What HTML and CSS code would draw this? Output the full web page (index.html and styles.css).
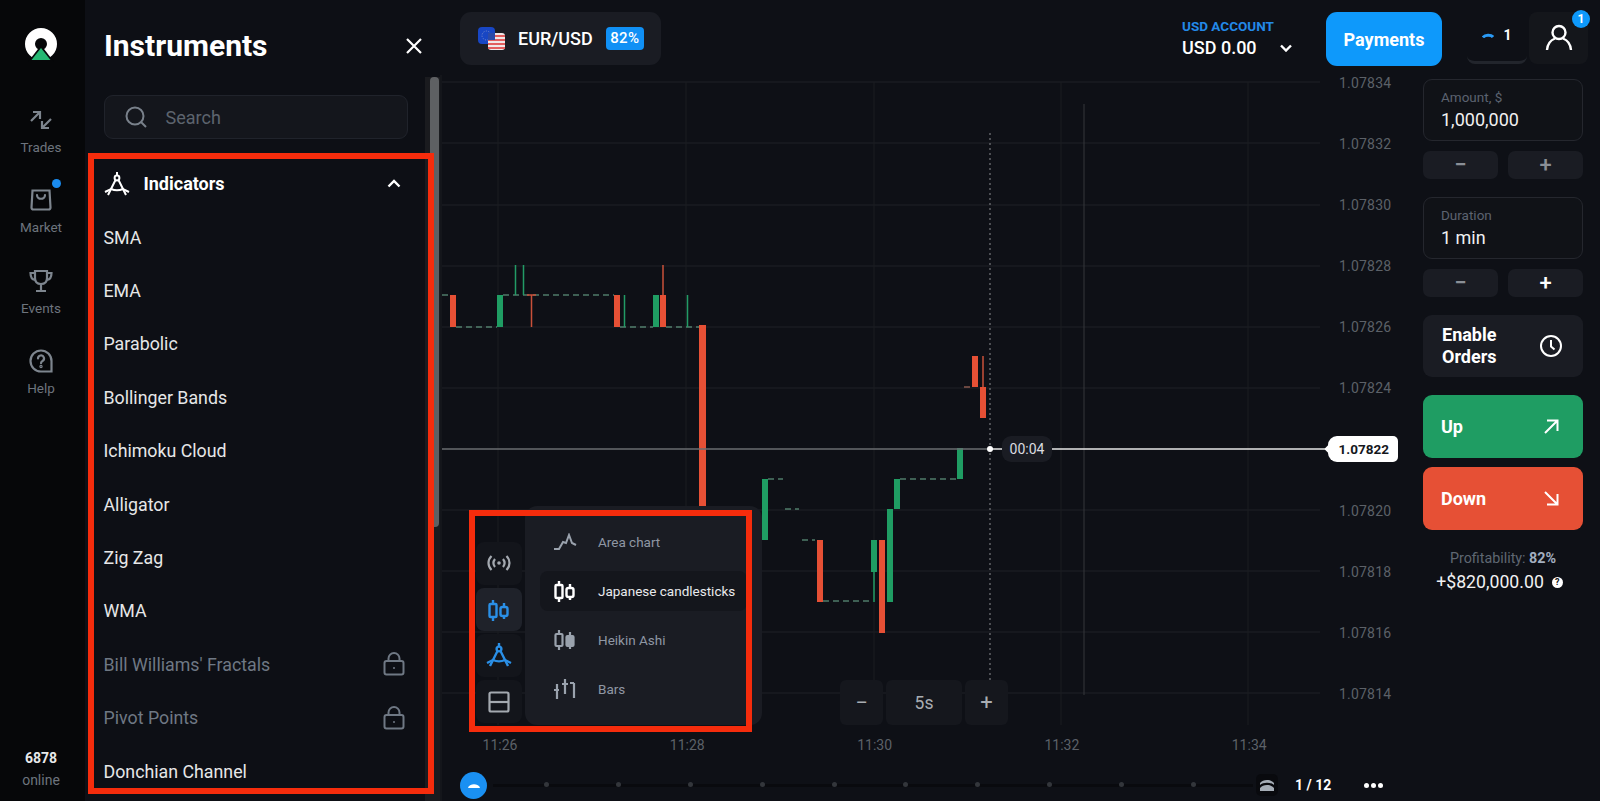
FILE: index.html
```html
<!DOCTYPE html>
<html lang="en">
<head>
<meta charset="utf-8">
<title>Instruments</title>
<link rel="stylesheet" href="styles.css">
</head>
<body>
<div class="app">
  <nav class="nav">
    <svg class="logo" viewBox="0 0 36 36" width="36" height="36"><circle cx="18" cy="17" r="11" fill="none" stroke="#fff" stroke-width="10"/><polygon points="18,18 5,35 31,35" fill="#060709"/><polygon points="18,21 8.500,33 27.500,33" fill="#25b873"/></svg>
    <a class="nav-item trades">
      <svg viewBox="0 0 24 24" width="24" height="24" fill="none" stroke="#7d858e" stroke-width="2.200"><path d="M2 13L11 4M4 4h7v7"/><path d="M22 11L13 20M20 20h-7v-7"/></svg>
      <span>Trades</span>
    </a>
    <a class="nav-item market">
      <i class="dot"></i>
      <svg viewBox="0 0 24 24" width="24" height="24" fill="none" stroke="#7d858e" stroke-width="2.200"><path d="M3.500 2.500h17l1 17a2 2 0 0 1-2 2h-15a2 2 0 0 1-2-2z"/><path d="M8 7c0 5 8 5 8 0" stroke-linecap="round"/></svg>
      <span>Market</span>
    </a>
    <a class="nav-item events">
      <svg viewBox="0 0 24 24" width="24" height="24" fill="none" stroke="#7d858e" stroke-width="2.200"><path d="M6 2h12v7c0 4-2.500 6-6 6s-6-2-6-6z"/><path d="M6 4H1.500c0 4 1.500 6.500 4.500 7M18 4h4.500c0 4-1.500 6.500-4.500 7M12 15v6M7 22h10"/></svg>
      <span>Events</span>
    </a>
    <a class="nav-item help">
      <svg viewBox="0 0 24 24" width="24" height="24" fill="none" stroke="#7d858e" stroke-width="2.200"><path d="M12 1.500a10.500 10.500 0 1 0 0 21h10.500V12A10.500 10.500 0 0 0 12 1.500z"/><path d="M9 9.500a3 3 0 1 1 4.500 2.500c-1 .6-1.500 1.200-1.500 2.200" stroke-linecap="round"/><circle cx="12" cy="17.500" r=".6"/></svg>
      <span>Help</span>
    </a>
    <div class="online"><b>6878</b><span>online</span></div>
  </nav>

  <aside class="panel">
    <header class="panel-head">
      <h1>Instruments</h1>
      <svg viewBox="0 0 18 18" width="18" height="18" fill="none" stroke="#fff" stroke-width="2.200"><path d="M2 2l14 14M16 2L2 16"/></svg>
    </header>
    <div class="panel-scroll">
      <div class="panel-body">
        <div class="search">
          <svg viewBox="0 0 22 22" width="22" height="22" fill="none" stroke="#79818b" stroke-width="2"><circle cx="10" cy="10" r="8.500"/><path d="M16 16l5 5"/></svg>
          <span>Search</span>
        </div>
        <div class="group-head">
          <svg class="compass" viewBox="0 0 26 26" width="26" height="26" fill="none" stroke="#fff" stroke-width="2"><use href="#compass-shape"/></svg>
          <strong>Indicators</strong>
          <svg viewBox="0 0 14 9" width="14" height="9" fill="none" stroke="#fff" stroke-width="2.400"><path d="M1.500 7.500L7 2l5.500 5.500"/></svg>
        </div>
        <ul class="rows">
          <li>SMA</li>
          <li>EMA</li>
          <li>Parabolic</li>
          <li>Bollinger Bands</li>
          <li>Ichimoku Cloud</li>
          <li>Alligator</li>
          <li>Zig Zag</li>
          <li>WMA</li>
          <li class="locked">Bill Williams' Fractals<svg viewBox="0 0 22 24" width="22" height="24" fill="none" stroke="#6f7884" stroke-width="2"><rect x="1.500" y="9" width="19" height="13.500" rx="2"/><path d="M5.500 9V6.500a5.500 5.500 0 0 1 11 0V9"/><circle cx="11" cy="16" r="1" fill="#6f7884" stroke="none"/></svg></li>
          <li class="locked">Pivot Points<svg viewBox="0 0 22 24" width="22" height="24" fill="none" stroke="#6f7884" stroke-width="2"><rect x="1.500" y="9" width="19" height="13.500" rx="2"/><path d="M5.500 9V6.500a5.500 5.500 0 0 1 11 0V9"/><circle cx="11" cy="16" r="1" fill="#6f7884" stroke="none"/></svg></li>
          <li>Donchian Channel</li>
        </ul>
      </div>
      <div class="track"><div class="thumb"></div></div>
    </div>
    <div class="mark mark-panel"></div>
  </aside>

  <main class="main">
    <header class="topbar">
      <div class="pair">
        <svg viewBox="0 0 28 26" width="28" height="26">
          <rect x="0" y="1" width="17" height="17" rx="4" fill="#1846c4"/>
          <circle cx="8.500" cy="9.500" r="4.500" fill="none" stroke="#7d8fc9" stroke-width="1" stroke-dasharray="1 1.500"/>
          <rect x="10" y="7" width="17" height="17" rx="3" fill="#f0e6e6"/>
          <path d="M10 10h17M10 14h17M10 18h17M10 22h17" stroke="#e25c5c" stroke-width="2"/>
          <rect x="10" y="7" width="7" height="7" fill="#2b4aa8"/>
        </svg>
        <span class="pair-name">EUR/USD</span>
        <span class="pct">82%</span>
      </div>
      <div class="account">
        <span class="acc-label">USD ACCOUNT</span>
        <span class="acc-value">USD 0.00<svg viewBox="0 0 12 8" width="12" height="8" fill="none" stroke="#fff" stroke-width="2.400"><path d="M1 1.500l5 5 5-5"/></svg></span>
      </div>
      <button class="pay">Payments</button>
      <div class="live">
        <svg viewBox="0 0 12 5" width="12" height="5" fill="none" stroke="#2a9af5" stroke-width="3"><path d="M1 4.500C3 1.500 9 1.500 11 4"/></svg>
        <b>1</b>
      </div>
      <div class="user">
        <svg viewBox="0 0 28 28" width="28" height="28" fill="none" stroke="#fff" stroke-width="2.400"><circle cx="14" cy="8.500" r="6.500"/><path d="M2 26c.5-6 4-10 8-11.500M26 26c-.5-6-4-10-8-11.500"/></svg>
        <i class="badge">1</i>
      </div>
    </header>

    <section class="work">
      <div class="stage">
        <svg class="chart" viewBox="440 66 983 735" width="983" height="735">
          <g class="grid">
            <path class="grid-v" d="M441 75V801"/>
            <path d="M442 82H1320M442 143H1320M442 205H1320M442 266H1320M442 327H1320M442 388H1320M442 510H1320M442 571H1320M442 632H1320M442 693H1320"/>
            <path class="grid-v" d="M498 82V725M686 82V725M874 82V725M1061 82V725M1248 82V725"/>
            <path class="grid-strong" d="M1084 104V695"/>
          </g>
          <g class="dash-up">
            <path d="M442 295h8M503 295h111M456 327h41M620 327h33M666 327h33M768 479h15M785 509h14M802 540h13M823 601h47M900 479h57"/>
          </g>
          <path class="dash-dn" d="M964 387h8"/>
          <g class="wick-up"><path d="M515.500 265v30M523.500 265v30M624.500 295v32M687.500 295v32M874 572v30"/></g>
          <g class="wick-dn"><path d="M531.500 295v32M527 295h9M663 265v30M983 356v31"/></g>
          <g class="up">
            <rect x="497" y="295" width="6" height="32"/><rect x="653" y="295" width="6" height="32"/>
            <rect x="762" y="479" width="6" height="61"/><rect x="871" y="540" width="6" height="32"/>
            <rect x="887" y="509" width="6" height="93"/><rect x="894" y="479" width="6" height="30"/>
            <rect x="957" y="448" width="6" height="31"/>
          </g>
          <g class="dn">
            <rect x="450" y="295" width="6" height="32"/><rect x="614" y="295" width="6" height="32"/>
            <rect x="660" y="295" width="6" height="32"/><rect x="699" y="325" width="7" height="182"/>
            <rect x="817" y="540" width="6" height="62"/><rect x="879" y="540" width="6" height="93"/>
            <rect x="972" y="356" width="6" height="31"/><rect x="980" y="387" width="6" height="31"/>
          </g>
          <path class="now-past" d="M442 449H990"/>
          <path class="now-dotted" d="M990 133V690"/>
          <path class="now-future" d="M990 449H1002M1052 449H1330"/>
          <circle cx="990" cy="449" r="3" fill="#fff"/>
        </svg>

        <div class="prices">
          <span>1.07834</span><span>1.07832</span><span>1.07830</span><span>1.07828</span><span>1.07826</span><span>1.07824</span>
          <span class="hole"></span>
          <span>1.07820</span><span>1.07818</span><span>1.07816</span><span>1.07814</span>
        </div>
        <div class="timer">00:04</div>
        <div class="tag">1.07822</div>

        <div class="tools">
          <div class="strip">
            <button><svg viewBox="0 0 26 18" width="26" height="18" fill="none" stroke="#a4a9b0" stroke-width="2.200"><path d="M5.500 2C1.500 6 1.500 12 5.500 16M20.500 2c4 4 4 10 0 14M9 5c-2 2.500-2 5.500 0 8M17 5c2 2.500 2 5.500 0 8"/><circle cx="13" cy="9" r="1.800" fill="#a4a9b0" stroke="none"/></svg></button>
            <button class="on"><svg viewBox="0 0 24 24" width="24" height="24" fill="none" stroke="#2a8fe6" stroke-width="2.400"><use href="#candles"/></svg></button>
            <button><svg viewBox="0 0 26 26" width="26" height="26" fill="none" stroke="#2a8fe6" stroke-width="2.400"><use href="#compass-shape"/></svg></button>
            <button><svg viewBox="0 0 22 22" width="22" height="22" fill="none" stroke="#a4a9b0" stroke-width="2.200"><rect x="1.500" y="1.500" width="19" height="19" rx="1.500"/><path d="M1.500 11h19"/></svg></button>
          </div>
          <div class="menu">
            <div class="menu-row"><svg viewBox="0 0 24 18" width="24" height="18" fill="none" stroke="#9aa2ad" stroke-width="2"><path d="M1 16h5l4-7 3 1 3-8 3 8 4 2"/></svg><span>Area chart</span></div>
            <div class="menu-row sel"><svg viewBox="0 0 24 24" width="24" height="24" fill="none" stroke="#fff" stroke-width="2.400"><use href="#candles"/></svg><span>Japanese candlesticks</span></div>
            <div class="menu-row"><svg viewBox="0 0 24 24" width="24" height="24" fill="none" stroke="#9aa2ad" stroke-width="2.200"><path d="M6 2v4M6 18v4M17 4v4M17 18v3"/><rect x="2.500" y="6" width="7" height="12" rx="1"/><rect x="13.500" y="8" width="7" height="10" rx="1" fill="#9aa2ad"/></svg><span>Heikin Ashi</span></div>
            <div class="menu-row"><svg viewBox="0 0 24 22" width="24" height="22" fill="none" stroke="#9aa2ad" stroke-width="2.200"><path d="M4 6v15M1 12h5M12 1v15M9 6h6M21 5v15M17 5h4"/></svg><span>Bars</span></div>
          </div>
          <div class="mark mark-tools"></div>
        </div>

        <div class="zoom">
          <span>−</span><span class="wide">5s</span><span>+</span>
        </div>

        <div class="times"><span>11:26</span><span>11:28</span><span>11:30</span><span>11:32</span><span>11:34</span></div>

        <div class="timeline">
          <span class="handle"><svg viewBox="0 0 12 6" width="12" height="6" fill="#fff"><path d="M0 6C1 1 11 1 12 6z"/></svg></span>
          <div class="ticks"><i></i><i></i><i></i><i></i><i></i><i></i><i></i><i></i><i></i><i></i></div>
          <span class="layers"><svg viewBox="0 0 14 12" width="14" height="12" fill="#a5adb6"><path d="M0 4C3 0 11 0 14 4V6C11 3 3 3 0 6zM0 9C3 5 11 5 14 9V12H0z"/></svg></span>
          <b class="page">1 / 12</b>
          <span class="more"><i></i><i></i><i></i></span>
        </div>
      </div>

      <div class="trade">
        <div class="field"><label>Amount, $</label><span>1,000,000</span></div>
        <div class="steppers"><button class="dim">−</button><button class="dim">+</button></div>
        <div class="field second"><label>Duration</label><span>1 min</span></div>
        <div class="steppers"><button class="dim">−</button><button>+</button></div>
        <button class="orders">Enable<br>Orders<svg viewBox="0 0 24 24" width="24" height="24" fill="none" stroke="#fff" stroke-width="2"><circle cx="12" cy="12" r="10"/><path d="M12 6v6.500l3.500 3"/></svg></button>
        <button class="bet up-btn">Up<svg viewBox="0 0 16 16" width="16" height="16" fill="none" stroke="#fff" stroke-width="2"><path d="M2 14L14.500 1.500M4 1.500h10.500V12"/></svg></button>
        <button class="bet down-btn">Down<svg viewBox="0 0 16 16" width="16" height="16" fill="none" stroke="#fff" stroke-width="2"><path d="M2 2l12.500 12.500M14.500 4v10.500H4"/></svg></button>
        <p class="profit-label">Profitability: <b>82%</b></p>
        <p class="profit">+$820,000.00<i>?</i></p>
      </div>
    </section>
  </main>
</div>

<svg class="defs" width="0" height="0" aria-hidden="true">
  <defs>
    <g id="compass-shape">
      <path d="M13 1v4"/><circle cx="13" cy="7" r="2.400"/>
      <path d="M11.500 9L4 24M14.500 9L22 24"/>
      <path d="M1 21l6-3c4 1.800 8 1.800 12 0l6 3"/>
    </g>
    <g id="candles">
      <path d="M6 2v4M6 19v4M17 5v4M17 18v3"/>
      <rect x="2.500" y="6" width="7" height="13" rx="1"/>
      <rect x="13.500" y="9" width="7" height="9" rx="2"/>
    </g>
  </defs>
</svg>
</body>
</html>
```
FILE: styles.css
```css
* { box-sizing: border-box; margin: 0; padding: 0; }
html, body { height: 100%; overflow: hidden; }
body { background: #0e1016; color: #fff; font-family: Roboto, "Liberation Sans", sans-serif; }
button { font-family: inherit; border: 0; color: #fff; }
ul { list-style: none; }
i { font-style: normal; }
.defs { position: absolute; }

.app { display: flex; width: 1600px; height: 801px; }

/* nav */
.nav { width: 85px; flex: none; background: #060709; display: flex; flex-direction: column; align-items: center; padding: 27px 3px 0 0; }
.logo { margin-bottom: 45px; flex: none; }
.nav-item { position: relative; display: flex; flex-direction: column; align-items: center; gap: 7px; height: 80.300px; color: #6d747d; font-size: 13.500px; line-height: 16px; }
.nav-item svg { display: block; }
.dot { position: absolute; top: -9.500px; right: 1.500px; width: 9px; height: 9px; border-radius: 50%; background: #1a8cf0; }
.online { margin-top: auto; margin-bottom: 12px; display: flex; flex-direction: column; align-items: center; gap: 5px; font-size: 14px; line-height: 17px; }
.online b { font-weight: 700; color: #e8e9ea; }
.online span { color: #6d747d; }

/* panel */
.panel { position: relative; width: 355px; flex: none; background: #0d0f15; display: flex; flex-direction: column; overflow: hidden; }
.panel-head { height: 77px; flex: none; display: flex; align-items: center; justify-content: space-between; padding: 15px 17px 0 19px; }
.panel-head h1 { font-size: 30px; line-height: 32px; font-weight: 700; }
.panel-scroll { flex: 1; display: flex; min-height: 0; }
.panel-body { width: 340px; padding: 18px 17px 0 18.500px; }
.search { height: 44px; display: flex; align-items: center; gap: 19px; padding-left: 20px; background: #14161c; border: 1px solid #20232b; border-radius: 9px; color: #5d646e; font-size: 18px; }
.group-head { height: 53.500px; margin-top: 18px; display: flex; align-items: center; gap: 14px; font-size: 18px; padding-right: 7px; }
.group-head strong { font-weight: 700; flex: 1; }
.rows li { height: 53.400px; display: flex; align-items: center; justify-content: space-between; font-size: 17.800px; color: #e6e7e8; padding-right: 3px; }
.rows li.locked { color: #6f7884; }
.track { width: 15px; background: #1a1b1f; padding-left: 5px; }
.thumb { width: 9px; height: 450px; background: #5e6063; border-radius: 4px; }

/* annotation frames */
.mark { position: absolute; border: 6px solid #f52c0c; pointer-events: none; }
.mark-panel { left: 3px; top: 153px; width: 346px; height: 641px; }
.mark-tools { left: -7px; top: -32px; width: 283px; height: 222px; }

/* main */
.main { flex: 1; display: flex; flex-direction: column; min-width: 0; }
.topbar { height: 66px; flex: none; display: flex; align-items: flex-start; padding: 12px 12px 0 20px; }
.pair { width: 201px; height: 53px; background: #1a1c23; border-radius: 11px; display: flex; align-items: center; padding-left: 18px; }
.pair-name { margin-left: 12px; font-size: 18px; font-weight: 500; }
.pct { margin-left: 13px; width: 38px; height: 23px; border-radius: 4px; background: #1090f5; font-size: 15px; font-weight: 500; text-align: center; line-height: 23px; letter-spacing: .3px; }
.account { margin-left: auto; width: 144px; display: flex; flex-direction: column; padding-top: 4px; }
.acc-label { font-size: 13.500px; line-height: 20px; font-weight: 700; color: #2389e8; }
.acc-value { font-size: 18px; line-height: 24px; font-weight: 500; display: flex; align-items: center; justify-content: space-between; padding-right: 34px; }
.pay { width: 116px; height: 54px; background: #0e99fb; border-radius: 11px; font-size: 18px; font-weight: 700; }
.live { width: 60px; height: 52px; margin-left: 25px; border-bottom: 3px solid #22252c; border-radius: 0 0 8px 8px; display: flex; align-items: center; justify-content: center; gap: 9px; padding-bottom: 3px; }
.live b { font-size: 14px; font-weight: 700; }
.user { position: relative; width: 59px; height: 52px; margin-left: 2px; background: #14161b; border-radius: 8px; display: flex; align-items: center; justify-content: center; }
.badge { position: absolute; right: -2px; top: -2px; width: 18px; height: 18px; border-radius: 50%; background: #0e99fb; font-size: 12px; font-weight: 700; text-align: center; line-height: 18px; }

.work { flex: 1; display: flex; min-height: 0; }
.stage { position: relative; width: 983px; flex: none; }
.chart { position: absolute; left: 0; top: 0; display: block; }
.grid path { stroke: #1e2026; stroke-width: 1; fill: none; }
.grid .grid-v { stroke: #1a1c21; }
.grid .grid-strong { stroke: #34363b; }
.dash-up path { stroke: #6fb092; stroke-width: 1.200; stroke-dasharray: 6 4; fill: none; }
.dash-dn { stroke: #a66a5a; stroke-width: 1.200; stroke-dasharray: 6 4; fill: none; }
.wick-up path { stroke: #229b66; stroke-width: 1.500; fill: none; }
.wick-dn path { stroke: #c9503a; stroke-width: 1.500; fill: none; }
.up rect { fill: #1f9d63; }
.dn rect { fill: #e65035; }
.now-past { stroke: #6a6c70; stroke-width: 1.500; fill: none; }
.now-dotted { stroke: #8a8c90; stroke-width: 1; stroke-dasharray: 2 3; fill: none; }
.now-future { stroke: #e6e6e6; stroke-width: 1.500; fill: none; }

.prices { position: absolute; left: 899px; top: -13px; display: flex; flex-direction: column; font-size: 14px; line-height: 61.100px; color: #5c6168; letter-spacing: .2px; }
.prices span { height: 61.100px; }
.timer { position: absolute; left: 562px; top: 370px; width: 50px; height: 26px; border-radius: 9px; background: #1a1c23; font-size: 14px; line-height: 26px; text-align: center; color: #dcdde0; }
.tag { position: absolute; left: 888px; top: 370px; width: 70px; height: 26px; background: #fff; border-radius: 9px 5px 5px 9px; color: #15171c; font-size: 13.500px; font-weight: 700; line-height: 26px; text-align: right; padding-right: 9px; }
.tag::before { content: ""; position: absolute; left: -2px; top: 9px; width: 8px; height: 8px; background: #fff; border-radius: 1px; transform: rotate(45deg); }

.tools { position: absolute; left: 36px; top: 476px; display: flex; }
.strip { width: 46px; display: flex; flex-direction: column; gap: 3px; }
.strip button { width: 46px; height: 43px; background: #13151b; border-radius: 8px; display: flex; align-items: center; justify-content: center; padding-bottom: 2px; }
.strip button.on, .strip button:last-child { padding-bottom: 0; }
.strip button.on { background: #1f222a; }
.menu { margin-left: 3px; margin-top: -36px; width: 237px; height: 219px; background: #1a1c23; border-radius: 12px; padding: 11.500px 0 0 15px; }
.menu-row { height: 49px; display: flex; align-items: center; font-size: 13.500px; color: #8f97a3; padding-left: 13px; border-radius: 8px; }
.menu-row svg { flex: none; margin-right: 21px; width: 24px; }
.menu-row.sel { background: #14161c; color: #e9eaec; height: 40px; margin: 4.500px 0; width: 207px; }

.zoom { position: absolute; left: 400px; top: 614px; display: flex; gap: 3px; height: 45px; color: #a9adb2; }
.zoom span { width: 43px; background: #15171d; border-radius: 6px; display: flex; align-items: center; justify-content: center; font-size: 22px; }
.zoom .wide { width: 76px; font-size: 17.500px; }

.times { position: absolute; left: 30px; top: 670px; display: flex; font-size: 14px; line-height: 18px; color: #5c6168; }
.times span { width: 60px; margin-left: 127.300px; text-align: center; }
.times span:first-child { margin-left: 0; }

.timeline { position: absolute; left: 20px; top: 706px; width: 943px; height: 26px; display: flex; align-items: center; }
.handle { width: 27px; height: 27px; border-radius: 50%; background: #1a90f2; display: flex; align-items: center; justify-content: center; flex: none; }
.ticks { width: 760px; height: 6px; margin-left: 6px; background: linear-gradient(#090a0e, #090a0e) center / 100% 3px no-repeat; display: flex; justify-content: space-between; padding: 0 57px 0 51px; flex: none; }
.ticks i { width: 5px; height: 5px; border-radius: 50%; background: #33363b; }
.layers { width: 22px; height: 22px; margin-left: 3px; background: #090a0e; border-radius: 5px; display: flex; align-items: center; justify-content: center; flex: none; }
.page { margin-left: 17px; font-size: 14px; font-weight: 700; width: 60px; white-space: nowrap; }
.more { margin-left: 9px; display: flex; gap: 2px; }
.more i { width: 5px; height: 5px; border-radius: 50%; background: #fff; }

/* trade column */
.trade { width: 177px; flex: none; padding-top: 13px; }
.field { width: 160px; height: 62px; border: 1px solid #25272e; border-radius: 9px; padding: 9px 17px 0; background: #101217; display: flex; flex-direction: column; }
.field.second { margin-top: 18px; }
.field label { font-size: 13.500px; line-height: 17px; color: #5c6370; }
.field span { font-size: 18px; line-height: 24px; margin-top: 2px; color: #f0f0f1; }
.steppers { display: flex; gap: 10px; width: 160px; margin-top: 10px; }
.steppers button { width: 75px; height: 28px; background: #1a1c23; border-radius: 7px; font-size: 22px; font-weight: 500; line-height: 26px; color: #fff; }
.steppers button.dim { color: #8a8f96; }
.orders { display: block; position: relative; width: 160px; height: 62px; margin-top: 18px; background: #1a1c23; border-radius: 9px; text-align: left; font-size: 18px; font-weight: 700; line-height: 22px; padding: 0 20px 0 19px; }
.orders svg { position: absolute; right: 20px; top: 19px; }
.bet { display: flex; align-items: center; justify-content: space-between; width: 160px; height: 63px; border-radius: 9px; margin-top: 18px; padding: 0 24px 0 18px; font-size: 18px; font-weight: 700; }
.up-btn { background: #1f9d63; }
.down-btn { background: #e65035; margin-top: 9px; padding-bottom: 1px; }
.profit-label { width: 160px; text-align: center; margin-top: 19px; font-size: 14.300px; line-height: 18px; color: #5f6772; }
.profit-label b { font-weight: 700; color: #a3afc0; }
.profit { width: 160px; margin-top: 4px; display: flex; justify-content: center; align-items: center; gap: 8px; font-size: 17.700px; line-height: 22px; color: #f1f1f2; white-space: nowrap; padding-right: 7px; }
.profit i { width: 11px; height: 11px; border-radius: 50%; background: #fff; color: #111; font-size: 9px; font-weight: 700; line-height: 11px; text-align: center; }
```
